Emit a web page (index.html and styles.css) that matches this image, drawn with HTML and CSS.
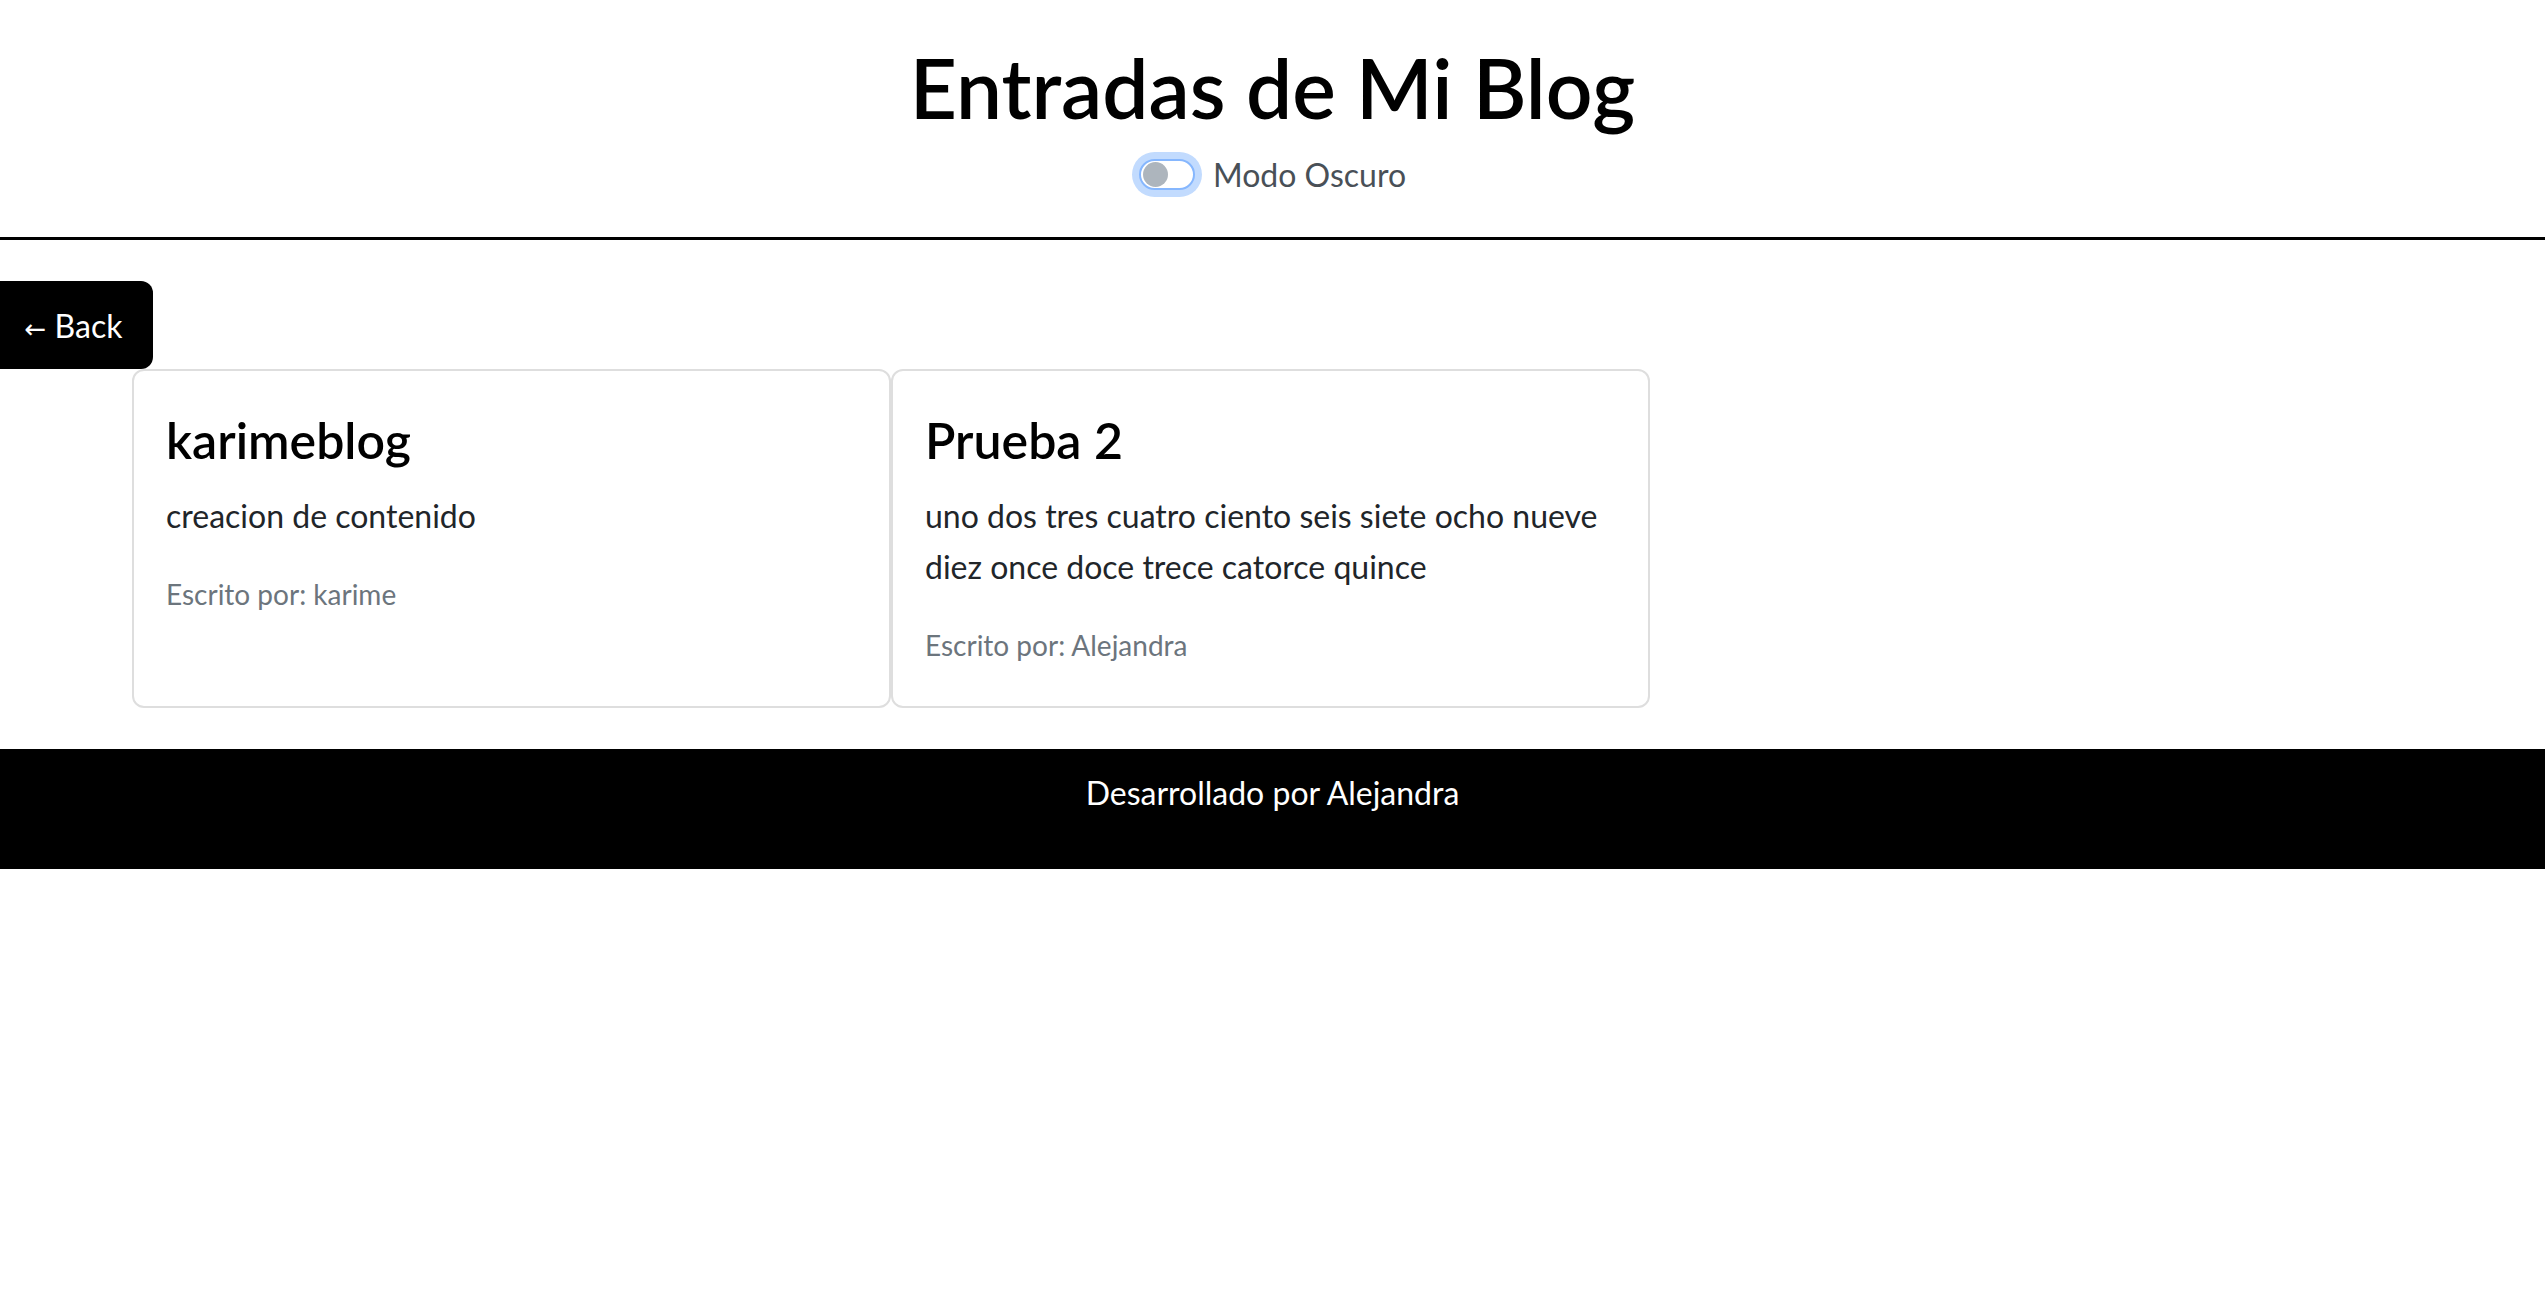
FILE: index.html
```html
<!DOCTYPE html>
<html lang="es">
<head>
<meta charset="utf-8">
<title>Entradas de Mi Blog</title>
<link rel="stylesheet" href="styles.css">
</head>
<body>
<header class="site-header">
  <h1 class="site-title">Entradas de Mi Blog</h1>
  <div class="mode-row">
    <span class="switch"><span class="knob"></span></span>
    <span class="mode-label">Modo Oscuro</span>
  </div>
</header>
<main class="content">
  <button class="back-btn"><span class="arrow">←</span> Back</button>
  <div class="cards">
    <article class="card">
      <h3 class="card-title">karimeblog</h3>
      <p class="card-text">creacion de contenido</p>
      <p class="card-author">Escrito por: karime</p>
    </article>
    <article class="card">
      <h3 class="card-title">Prueba 2</h3>
      <p class="card-text">uno dos tres cuatro ciento seis siete ocho nueve diez once doce trece catorce quince</p>
      <p class="card-author">Escrito por: Alejandra</p>
    </article>
  </div>
</main>
<footer class="site-footer">
  <p class="footer-text">Desarrollado por Alejandra</p>
</footer>
</body>
</html>
```
FILE: styles.css
```css
* { box-sizing: border-box; }
html, body { margin: 0; padding: 0; background: #fff; }
body {
  font-family: Lato, "Noto Sans", "Liberation Sans", sans-serif;
  font-size: 32px;
  color: #212529;
}
.site-header {
  text-align: center;
  padding-top: 38px;
  padding-bottom: 39px;
  border-bottom: 3px solid #000;
}
.site-title {
  margin: 0;
  font-size: 82px;
  font-weight: 600;
  line-height: 98px;
  color: #000;
}
.mode-row {
  display: flex;
  justify-content: center;
  align-items: center;
  gap: 18px;
  margin-top: 14px;
  height: 48px;
}
.switch {
  position: relative;
  display: inline-block;
  width: 56px;
  height: 31px;
  border: 2px solid #86b7fe;
  border-radius: 16px;
  background: #fff;
  box-shadow: 0 0 0 7px #c2dbfe;
}
.knob {
  position: absolute;
  left: 2px;
  top: 1px;
  width: 25px;
  height: 25px;
  border-radius: 50%;
  background: #adb5bd;
}
.mode-label {
  color: #495057;
  font-size: 32px;
}
.content {
  padding-top: 41px;
  padding-bottom: 41px;
}
.back-btn {
  display: block;
  width: 153px;
  height: 88px;
  margin: 0;
  padding: 0 6px 0 0;
  border: none;
  border-radius: 0 12px 12px 0;
  background: #000;
  color: #fff;
  font-family: inherit;
  font-size: 32px;
  text-align: center;
}
.arrow {
  font-size: 26px;
  font-family: "DejaVu Sans", sans-serif;
}
.cards {
  display: flex;
  margin-left: 132px;
}
.card {
  width: 759px;
  border: 2px solid #dedede;
  border-radius: 12px;
  padding: 39px 32px 40px 32px;
}
.card-title {
  margin: 0 0 20px 0;
  font-size: 50px;
  font-weight: 600;
  line-height: 60px;
  color: #000;
}
.card-text {
  margin: 0 0 32px 0;
  line-height: 51px;
}
.card-author {
  margin: 0;
  font-size: 28px;
  line-height: 42px;
  color: #6c757d;
}
.site-footer {
  background: #000;
  color: #fff;
  height: 120px;
  text-align: center;
  padding-top: 20px;
}
.footer-text {
  margin: 0;
  font-size: 32px;
  line-height: 48px;
}
```
